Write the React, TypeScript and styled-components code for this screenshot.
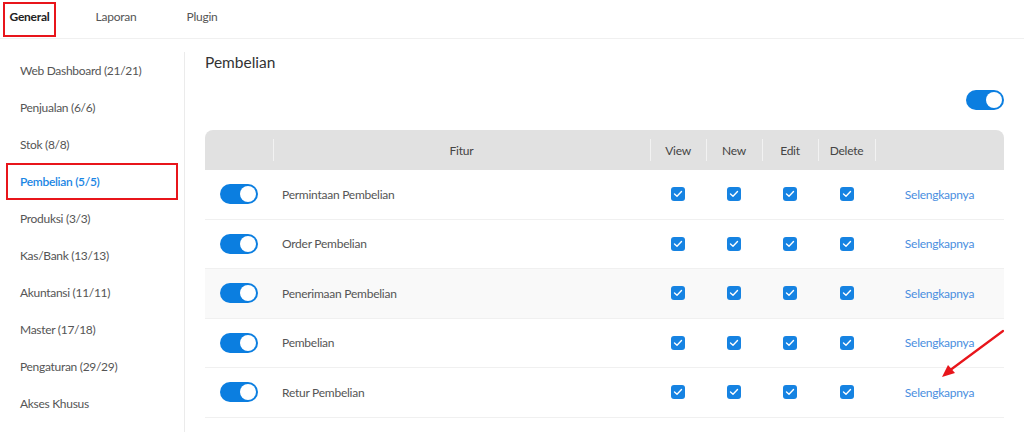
import React from "react";
import styled, { createGlobalStyle } from "styled-components";

const Global = createGlobalStyle`
  html, body { margin: 0; padding: 0; background: #fff; }
  body { font-family: Lato, "Noto Sans", sans-serif; color: #4a4a4a; letter-spacing: -0.25px; }
  * { box-sizing: border-box; }
`;

const Page = styled.div`
  width: 1024px;
  height: 432px;
  overflow: hidden;
  position: relative;
  background: #fff;
`;

const TabBar = styled.div`
  height: 39px;
  display: flex;
  align-items: stretch;
  padding-left: 3px;
  border-bottom: 1px solid #f0f0f0;
`;

const Tab = styled.div<{ $active?: boolean; $w: number }>`
  width: ${(p) => p.$w}px;
  display: flex;
  align-items: center;
  justify-content: center;
  padding-bottom: 6px;
  font-size: 12px;
  color: ${(p) => (p.$active ? "#222" : "#555")};
  font-weight: ${(p) => (p.$active ? 700 : 400)};
  border: ${(p) => (p.$active ? "2px solid #e8151b" : "2px solid transparent")};
  margin-top: 2px;
  margin-bottom: 1px;
`;

const Body = styled.div`
  display: flex;
  height: 393px;
`;

const Sidebar = styled.div`
  width: 185px;
  border-right: 1px solid #ebebeb;
  margin-top: 13px;
  padding: 0 6px;
  display: flex;
  flex-direction: column;
`;

const SideItem = styled.div<{ $active?: boolean }>`
  height: 37px;
  flex-shrink: 0;
  display: flex;
  align-items: center;
  padding-left: 12px;
  font-size: 12px;
  letter-spacing: -0.3px;
  color: ${(p) => (p.$active ? "#1a86e4" : "#555")};
  font-weight: ${(p) => (p.$active ? 600 : 400)};
  border: ${(p) => (p.$active ? "2px solid #e8151b" : "2px solid transparent")};
`;

const Main = styled.div`
  flex: 1;
  padding: 12px 20px 0 20px;
  display: flex;
  flex-direction: column;
`;

const Title = styled.div`
  font-size: 15.5px;
  color: #333;
  height: 22px;
  line-height: 22px;
  letter-spacing: 0;
`;

const TopRight = styled.div`
  display: flex;
  justify-content: flex-end;
  margin-top: 17px;
  margin-bottom: 20px;
`;

const Switch = styled.div`
  width: 38px;
  height: 20px;
  border-radius: 10px;
  background: #0b7ee0;
  position: relative;
  flex-shrink: 0;
  &::after {
    content: "";
    position: absolute;
    right: 2px;
    top: 2px;
    width: 16px;
    height: 16px;
    border-radius: 50%;
    background: #fff;
  }
`;

const cols = "68px 377px 56px 56px 56px 57px 1fr";

const Table = styled.div`
  width: 799px;
  display: flex;
  flex-direction: column;
`;

const HeadRow = styled.div`
  display: grid;
  grid-template-columns: ${cols};
  height: 40px;
  background: #e1e1e1;
  border-radius: 8px 8px 0 0;
`;

const HeadCell = styled.div<{ $sep?: boolean }>`
  position: relative;
  display: flex;
  align-items: center;
  justify-content: center;
  font-size: 12px;
  color: #444;
  &::before {
    content: "";
    display: ${(p) => (p.$sep ? "block" : "none")};
    position: absolute;
    left: 0;
    top: 9px;
    bottom: 9px;
    width: 1px;
    background: #f2f2f2;
  }
`;

const Row = styled.div<{ $hover?: boolean }>`
  display: grid;
  grid-template-columns: ${cols};
  height: 49.5px;
  background: ${(p) => (p.$hover ? "#f9f9f9" : "#fff")};
  border-bottom: 1px solid #f0f0f0;
`;

const Cell = styled.div<{ $left?: boolean }>`
  display: flex;
  align-items: center;
  justify-content: ${(p) => (p.$left ? "flex-start" : "center")};
  padding-left: ${(p) => (p.$left ? "9px" : "0")};
  font-size: 12px;
  color: #555;
`;

const Check = styled.div`
  width: 14px;
  height: 14px;
  border-radius: 3px;
  background: #1683e2;
  display: flex;
  align-items: center;
  justify-content: center;
`;

const Link = styled.span`
  color: #4a8ee0;
  font-size: 12px;
`;

const Arrow = styled.svg`
  position: absolute;
  left: 935px;
  top: 325px;
`;

const CheckBox = () => (
  <Check>
    <svg width="10" height="8" viewBox="0 0 10 8">
      <path d="M1.5 4 L4 6.2 L8.5 1.5" fill="none" stroke="#fff" strokeWidth="1.4" strokeLinecap="round" strokeLinejoin="round" />
    </svg>
  </Check>
);

const side = [
  "Web Dashboard (21/21)",
  "Penjualan (6/6)",
  "Stok (8/8)",
  "Pembelian (5/5)",
  "Produksi (3/3)",
  "Kas/Bank (13/13)",
  "Akuntansi (11/11)",
  "Master (17/18)",
  "Pengaturan (29/29)",
  "Akses Khusus",
];

const rows = [
  "Permintaan Pembelian",
  "Order Pembelian",
  "Penerimaan Pembelian",
  "Pembelian",
  "Retur Pembelian",
];

export default function App() {
  return (
    <Page>
      <Global />
      <TabBar>
        <Tab $active $w={53}>General</Tab>
        <Tab $w={120}>Laporan</Tab>
        <Tab $w={52}>Plugin</Tab>
      </TabBar>
      <Body>
        <Sidebar>
          {side.map((s) => (
            <SideItem key={s} $active={s.startsWith("Pembelian")}>{s}</SideItem>
          ))}
        </Sidebar>
        <Main>
          <Title>Pembelian</Title>
          <TopRight>
            <Switch />
          </TopRight>
          <Table>
            <HeadRow>
              <HeadCell />
              <HeadCell $sep>Fitur</HeadCell>
              <HeadCell $sep>View</HeadCell>
              <HeadCell $sep>New</HeadCell>
              <HeadCell $sep>Edit</HeadCell>
              <HeadCell $sep>Delete</HeadCell>
              <HeadCell $sep />
            </HeadRow>
            {rows.map((r, i) => (
              <Row key={r} $hover={i === 2}>
                <Cell><Switch /></Cell>
                <Cell $left>{r}</Cell>
                <Cell><CheckBox /></Cell>
                <Cell><CheckBox /></Cell>
                <Cell><CheckBox /></Cell>
                <Cell><CheckBox /></Cell>
                <Cell><Link>Selengkapnya</Link></Cell>
              </Row>
            ))}
          </Table>
        </Main>
      </Body>
      <Arrow width="80" height="60" viewBox="0 0 80 60">
        <line x1="68" y1="6" x2="14" y2="46" stroke="#e8151b" strokeWidth="2.2" strokeLinecap="round" />
        <polygon points="7,52 13,40 20,48" fill="#e8151b" />
      </Arrow>
    </Page>
  );
}
